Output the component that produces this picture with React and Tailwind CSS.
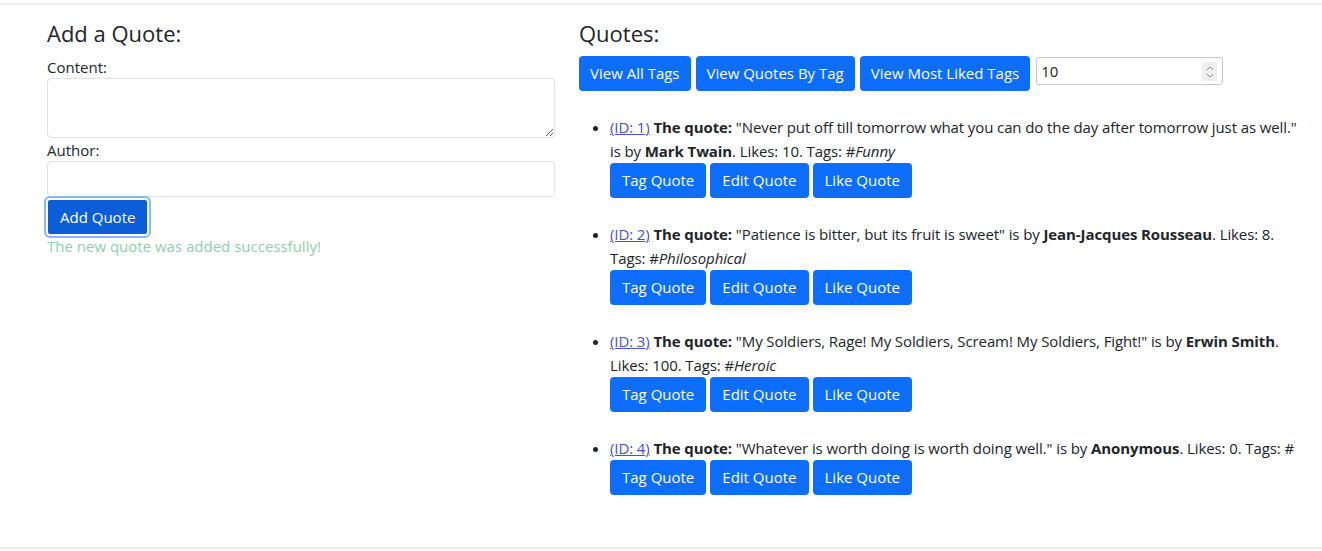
import React, { useState } from 'react';

const quotes = [
  { id: 1, text: 'Never put off till tomorrow what you can do the day after tomorrow just as well.', author: 'Mark Twain', likes: 10, tag: 'Funny' },
  { id: 2, text: 'Patience is bitter, but its fruit is sweet', author: 'Jean-Jacques Rousseau', likes: 8, tag: 'Philosophical' },
  { id: 3, text: 'My Soldiers, Rage! My Soldiers, Scream! My Soldiers, Fight!', author: 'Erwin Smith', likes: 100, tag: 'Heroic' },
  { id: 4, text: 'Whatever is worth doing is worth doing well.', author: 'Anonymous', likes: 0, tag: '' },
];

const btn = 'h-[35px] rounded-[4px] bg-[#0d6efd] text-white text-[15px] leading-none';

const App = () => {
  const [count, setCount] = useState(10);

  return (
    <div className="min-h-[551px] bg-white text-[15px] leading-6 text-[#212529]" style={{ fontFamily: '"Open Sans", "Liberation Sans", sans-serif' }}>
      <div className="h-[3px]" />
      <div className="h-[2px] bg-[#eeeeee]" />
      <div className="flex gap-6 pl-[47px] pt-[14px] h-[542px]">
        {/* Add form */}
        <div className="w-[508px] flex flex-col">
          <h2 className="text-[22px] leading-7 mb-[9px]">Add a Quote:</h2>
          <label className="leading-[22px]">Content:</label>
          <textarea className="h-[60px] w-full border border-[#dee2e6] rounded-[4px] resize-y" />
          <label className="leading-[22px] mt-[1px]">Author:</label>
          <input className="h-[36px] w-full border border-[#dee2e6] rounded-[4px]" />
          <div className="mt-[1px]">
            <button className="h-[38px] px-3 -ml-[1px] rounded-[4px] bg-[#0b5ed7] text-white text-[15px] border-2 border-white ring-2 ring-[#86b7fe]">
              Add Quote
            </button>
          </div>
          <p className="text-[#8fcfb0] -mt-[2px]">The new quote was added successfully!</p>
        </div>

        {/* Quote list */}
        <div className="w-[720px]">
          <h2 className="text-[22px] leading-7 mb-[9px]">Quotes:</h2>
          <div className="flex items-start gap-[5px]">
            <button className={`${btn} px-[11px]`}>View All Tags</button>
            <button className={`${btn} px-[11px]`}>View Quotes By Tag</button>
            <button className={`${btn} px-[11px]`}>View Most Liked Tags</button>
            <div className="relative mt-[1px] ml-[1px] w-[187px] h-[28px] border border-[#c8c8c8] rounded-[3px] flex items-center">
              <span className="pl-1">{count}</span>
              <div className="absolute right-[5px] top-[4px] w-[15px] h-[19px] bg-[#efefef] flex flex-col items-center justify-center gap-[2px] text-[#8a8a8a]">
                <svg width="8" height="5" viewBox="0 0 8 5" onClick={() => setCount(count + 1)}><path d="M1 4 L4 1 L7 4" fill="none" stroke="currentColor" strokeWidth="1" /></svg>
                <svg width="8" height="5" viewBox="0 0 8 5" onClick={() => setCount(count - 1)}><path d="M1 1 L4 4 L7 1" fill="none" stroke="currentColor" strokeWidth="1" /></svg>
              </div>
            </div>
          </div>
          <ul className="list-disc pl-[31px] mt-6 tracking-[-0.1px]">
            {quotes.map(q => (
              <li key={q.id} className="mb-6">
                <a href="#" className="text-[#4a4fd0] underline">(ID: {q.id})</a>{' '}
                <b>The quote:</b> "{q.text}" is by <b>{q.author}</b>. Likes: {q.likes}. Tags: #<i>{q.tag}</i>
                <div className="flex gap-1 tracking-normal">
                  <button className={`${btn} px-3`}>Tag Quote</button>
                  <button className={`${btn} px-3`}>Edit Quote</button>
                  <button className={`${btn} px-3`}>Like Quote</button>
                </div>
              </li>
            ))}
          </ul>
        </div>
      </div>
      <div className="h-[2px] bg-[#eeeeee]" />
    </div>
  );
};

export default App;
